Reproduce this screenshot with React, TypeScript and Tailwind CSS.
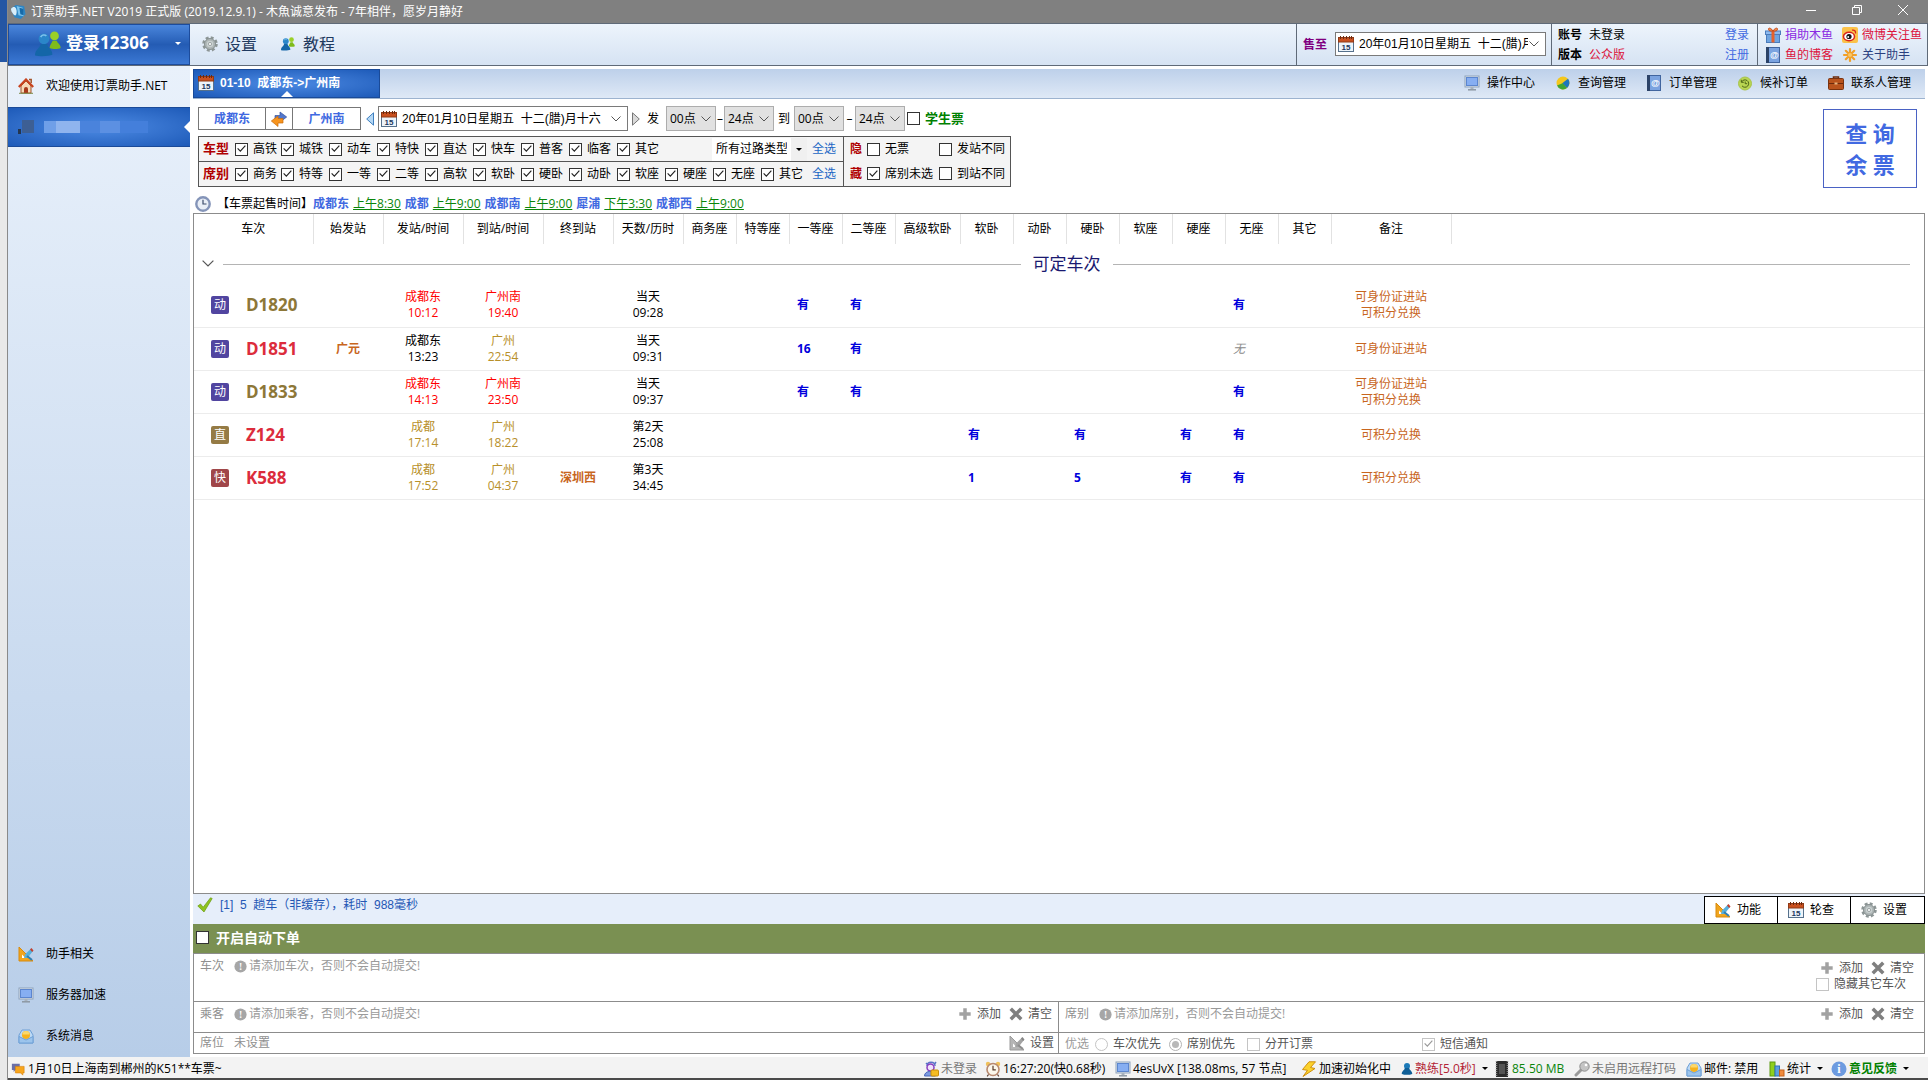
import { useState, type ReactNode } from "react";
import clsx from "clsx";

/* ---------- icons ---------- */

type IconProps = { className?: string };

const I = ({ className = "size-4", children }: { className?: string; children: ReactNode }) => (
  <svg viewBox="0 0 16 16" className={clsx("shrink-0", className)} fill="none" aria-hidden="true">
    {children}
  </svg>
);

const CalendarIcon = (p: IconProps) => (
  <I {...p}>
    <rect x="0.5" y="2.5" width="15" height="13" fill="#eef4fa" stroke="#56718c" />
    <rect x="0.5" y="1.5" width="15" height="4.5" fill="#c9501f" stroke="#8f3a17" />
    <path d="M2.5 0v3M5.5 0v3M8.5 0v3M11.5 0v3M13.5 0v3" stroke="#6b2a10" />
    <text x="8" y="13.6" fontSize="8" fontWeight="700" textAnchor="middle" fill="#1c3a5e" fontFamily="Liberation Sans, sans-serif">
      15
    </text>
  </I>
);

const AppIcon = (p: IconProps) => (
  <I {...p}>
    <path d="M0 5l5-4 9 1 1.500 9-5 5-7-2z" fill="#2f86c4" />
    <path d="M6 2l6.500 2 1 9-5.500-1z" fill="#7cc4ee" />
    <path d="M0 5c2-2.500 4.500-2.500 5.500 0s.5 6-.5 7-5-3-5-7z" fill="#d9eefa" />
    <path d="M9 4l4 1 .5 7-3.500-1z" fill="#176aa8" />
  </I>
);

const PeopleIcon = (p: IconProps) => (
  <I {...p}>
    <circle cx="12" cy="3" r="2.700" fill="#9ad027" />
    <path d="M9 10.500c0-2 1.400-3 1.800-4.500h2.600c.4 1.600 2.400 2 2.400 4.500-1.500.8-5 .9-6.800 0z" fill="#7fbb1b" />
    <circle cx="5.500" cy="4.800" r="3.300" fill="#2a86c9" />
    <path d="M0 15c0-3.800 3.200-4.500 3.500-7h4c.4 2.500 3.200 3.200 3.200 6.600-2 .9-7.600 1.200-10.700.4z" fill="#1466a8" />
    <path d="M3.500 3.800a2.200 2.200 0 0 1 3.500-.8" stroke="#7cc0ec" />
  </I>
);

const GearIcon = (p: IconProps) => (
  <I {...p}>
    <circle cx="8" cy="8" r="6.500" stroke="#8d9696" strokeWidth="2.500" strokeDasharray="2.900 2.200" />
    <circle cx="8" cy="8" r="5.500" fill="#aeb6b6" stroke="#868f8f" />
    <circle cx="8" cy="8" r="3.200" fill="#c9d0d0" />
    <circle cx="8" cy="8" r="1.600" fill="#f4f6f6" stroke="#868f8f" strokeWidth=".7" />
  </I>
);

const HomeIcon = (p: IconProps) => (
  <I {...p}>
    <path d="M3 8v7h10V8L8 3z" fill="#f6d9b8" stroke="#a4552c" />
    <path d="M.8 9L8 1.500 15.200 9" stroke="#c8431f" strokeWidth="2.200" />
    <path d="M11 1.500h2.200V5" stroke="#a4552c" strokeWidth="1.500" />
    <path d="M6 15v-4a2 2 0 0 1 4 0v4z" fill="#a8391b" />
    <path d="M1 15.300h14" stroke="#7c8a4a" />
  </I>
);

const MonitorIcon = (p: IconProps) => (
  <I {...p}>
    <rect x="1" y="1" width="14" height="11" fill="#dfe6ee" stroke="#8fa3bb" />
    <rect x="2.500" y="2.500" width="11" height="8" fill="#86aef2" stroke="#5c86cf" />
    <path d="M6.500 12h3v2h-3z" fill="#a8b2bd" />
    <path d="M4 14.800h8" stroke="#8c97a3" strokeWidth="1.500" />
  </I>
);

const MailIcon = (p: IconProps) => (
  <I {...p}>
    <path d="M1 7l3-5h8l3 5v8H1z" fill="#bcd9f5" stroke="#6ea0d6" />
    <circle cx="8" cy="7" r="4" fill="#f6b21c" />
    <path d="M4.500 6.500a3.500 3.500 0 0 1 7 0" fill="#fbd86b" />
    <path d="M1 8.500l7 3.500 7-3.500V15H1z" fill="#9cc4ec" stroke="#6ea0d6" />
  </I>
);

const RulerIcon = ({ className, muted }: IconProps & { muted?: boolean }) => (
  <I className={className}>
    <path d="M1 1v14h14z" fill={muted ? "#b5b5b5" : "#f0a51e"} stroke={muted ? "#9b9b9b" : "#d88a0c"} />
    <path d="M4 8.500V12h3.500z" fill="#fff" />
    <path d="M6 12l1-3.500L13 2.500l2 2.500-5.500 7z" fill={muted ? "#a3a3a3" : "#56b0dc"} />
    <path d="M12 3.500L13.500 2l2 2.500L14.200 6z" fill={muted ? "#858585" : "#c4402f"} />
    <path d="M9 10l5 4" stroke={muted ? "#8d8d8d" : "#2f80b4"} strokeWidth="2" />
  </I>
);

const GiftIcon = (p: IconProps) => (
  <I {...p}>
    <rect x="1.500" y="7" width="13" height="8.500" fill="#6fa4e0" stroke="#4b7cbc" />
    <rect x=".5" y="4" width="15" height="3.500" fill="#8dbaf0" stroke="#4b7cbc" />
    <path d="M6.500 4h3v11.500h-3z" fill="#e5622c" />
    <path d="M8 4C6 .5 3 .5 3.500 2.500S6 4 8 4zM8 4c2-3.500 5-3.500 4.500-1.500S10 4 8 4z" fill="#f08a4a" stroke="#c44a1c" />
  </I>
);

const WeiboIcon = (p: IconProps) => (
  <I {...p}>
    <rect width="16" height="16" rx="2" fill="#fbc24a" />
    <ellipse cx="7" cy="9.500" rx="5.500" ry="4.200" fill="#fff" stroke="#d8251c" strokeWidth="1.500" />
    <circle cx="7" cy="9.500" r="2.600" fill="#161616" />
    <circle cx="6.200" cy="10" r=".9" fill="#fff" />
    <path d="M10 3.200c2.500-.7 4 1 3.500 3.300" stroke="#d8251c" strokeWidth="1.300" />
  </I>
);

const BookIcon = (p: IconProps) => (
  <I {...p}>
    <rect x="1.500" y=".5" width="13" height="15" fill="#7ba3e0" stroke="#41659f" />
    <path d="M1 0h3v16H1z" fill="#2c4368" />
    <text x="9.300" y="11" fontSize="9" fontWeight="700" textAnchor="middle" fill="#fff" fontFamily="Liberation Sans, sans-serif">
      @
    </text>
  </I>
);

const SunIcon = (p: IconProps) => (
  <I {...p}>
    <path d="M8 2v12M2 8h12M3.800 3.800l8.400 8.400M12.200 3.800l-8.400 8.400" stroke="#f0a02a" strokeWidth="2.200" strokeLinecap="round" />
    <circle cx="8" cy="8" r="2" fill="#fbc766" />
  </I>
);

const PieIcon = (p: IconProps) => (
  <I {...p}>
    <circle cx="8" cy="8" r="6.500" fill="#f5c71c" />
    <path d="M8 8L2 10.500A6.500 6.500 0 0 0 12 13z" fill="#3fa535" />
    <path d="M7.500 8L13 3.800A6.500 6.500 0 0 1 12 13z" fill="#1d76bd" />
  </I>
);

const HistoryIcon = (p: IconProps) => (
  <I {...p}>
    <circle cx="8" cy="8.500" r="6.500" fill="#b9d552" stroke="#a9c44c" />
    <path d="M4.600 7A3.700 3.700 0 1 1 5 10.800M4.300 4.800v2.500h2.500" stroke="#4c6417" />
    <path d="M8.200 6.500v2.200h2" stroke="#4c6417" />
  </I>
);

const CaseIcon = (p: IconProps) => (
  <I {...p}>
    <path d="M5.500 4V2h5v2" stroke="#6d2b0c" strokeWidth="1.500" />
    <rect x=".5" y="3.500" width="15" height="11" rx="1" fill="#b9531c" stroke="#7a330f" />
    <path d="M1 8.500h14" stroke="#6d2b0c" />
    <rect x="6.500" y="7.500" width="3" height="2" fill="#e8b27c" />
  </I>
);

const SwapIcon = (p: IconProps) => (
  <I {...p}>
    <path d="M4 4.500h5V1L15.700 6 9 11V8.500H4z" fill="#5377cc" stroke="#3455a2" strokeWidth=".7" />
    <path d="M12 7.500H7V5L.3 10 7 15.500V12h5z" fill="#f7941d" stroke="#c76c0b" strokeWidth=".7" />
  </I>
);

const ClockIcon = (p: IconProps) => (
  <I {...p}>
    <circle cx="8" cy="8" r="6.700" fill="#e9eef6" stroke="#8494b8" strokeWidth="2.400" />
    <path d="M8 3.800V8h3.500" stroke="#3d4c6b" strokeWidth="1.200" />
  </I>
);

const CheckIcon = (p: IconProps) => (
  <I {...p}>
    <path d="M.8 9L3.500 7l2.700 3.200L13.500.8l1.700.7L7 15z" fill="#8fc31f" stroke="#6a9c12" strokeWidth=".7" />
  </I>
);

const InfoIcon = ({ className, color = "#a6a6a6", mark = "!" }: IconProps & { color?: string; mark?: string }) => (
  <I className={className}>
    <circle cx="8" cy="8" r="7.500" fill={color} />
    <text x="8" y="12.300" fontSize="12" fontWeight="700" textAnchor="middle" fill="#fff" fontFamily="Liberation Serif, serif">
      {mark}
    </text>
  </I>
);

const PlusIcon = ({ className = "size-3.5" }: IconProps) => (
  <I className={className}>
    <path d="M8 1.500v13M1.500 8h13" stroke="#a2a2a2" strokeWidth="4" />
  </I>
);

const CrossIcon = ({ className = "size-3.5" }: IconProps) => (
  <I className={className}>
    <path d="M2 2l12 12M14 2L2 14" stroke="#7f7f7f" strokeWidth="4" />
  </I>
);

const ChatIcon = (p: IconProps) => (
  <I {...p}>
    <path d="M1 2h9v7H5l-2 2.500V9H1z" fill="#6a6fa8" />
    <path d="M5 5h10v7.500h-1.500V15L11 12.500H5z" fill="#f7a51c" stroke="#d9820a" strokeWidth=".7" />
  </I>
);

const UserLockIcon = (p: IconProps) => (
  <I {...p}>
    <path d="M4 5c0-5 8-5 8 0M3 2l2 2M13 1l-2 3" stroke="#5b74c7" strokeWidth="1.500" />
    <circle cx="7.500" cy="6.500" r="3.500" fill="#efe2fb" stroke="#8a3fc0" strokeWidth="1.500" />
    <path d="M1.500 15c0-6 10-6 11 0z" fill="#7d9be0" stroke="#4a66b8" />
    <rect x="8" y="9" width="7.500" height="6" rx="1" fill="#f5bc22" stroke="#c98d0a" />
  </I>
);

const AlarmIcon = (p: IconProps) => (
  <I {...p}>
    <circle cx="3" cy="3" r="2.200" fill="#f0c15a" />
    <circle cx="13" cy="3" r="2.200" fill="#f0c15a" />
    <circle cx="8" cy="8.500" r="6" fill="#fbf7ec" stroke="#b98a70" strokeWidth="1.600" />
    <path d="M8 4.800v4h2.800M3.500 13.500L2.200 15.300M12.500 13.500l1.300 1.800" stroke="#5a3b2b" strokeWidth="1.200" />
  </I>
);

const BoltIcon = (p: IconProps) => (
  <I {...p}>
    <path d="M8 .8L1.500 8.500l5 .8L2 15.500 14 7.500 9.500 6.500 14.500.8z" fill="#fbd22c" stroke="#cf8f0e" />
  </I>
);

const PawnIcon = ({ className = "h-4 w-3" }: IconProps) => (
  <I className={className}>
    <circle cx="8" cy="4" r="4" fill="#1c7ab8" />
    <path d="M1 14.500C1 10 5 9.500 5 6.500h6c0 3 4 3.500 4 8-3 1.500-11 1.500-14 0z" fill="#105f97" />
  </I>
);

const ChipIcon = (p: IconProps) => (
  <I {...p}>
    <rect x="2" y="0" width="12" height="16" fill="#2c2c2c" />
    <path d="M2.500 0v16M13.500 0v16" stroke="#8c8c8c" strokeWidth="1.500" strokeDasharray="1 1" />
    <rect x="5" y="3" width="6" height="10" fill="#555" />
  </I>
);

const KeyIcon = (p: IconProps) => (
  <I {...p}>
    <path d="M8.500 7.500L2 14" stroke="#9a9a9a" strokeWidth="3" strokeLinecap="round" />
    <circle cx="10.500" cy="5.500" r="4.700" fill="#c4c4c4" stroke="#8d8d8d" />
    <circle cx="12" cy="4" r="1.300" fill="#fff" />
  </I>
);

const ChartIcon = (p: IconProps) => (
  <I {...p}>
    <rect x="1" y="1" width="5" height="14" fill="#8fcf1d" stroke="#5d9a10" />
    <rect x="6" y="5" width="4.500" height="10" fill="#5ca0e0" stroke="#2f70b5" />
    <rect x="10.500" y="9" width="4.500" height="6" fill="#f08a3c" stroke="#c3611a" />
  </I>
);

const Caret = ({ className = "text-black" }: IconProps) => (
  <svg viewBox="0 0 6 3" className={clsx("h-[3px] w-1.5 shrink-0", className)} fill="currentColor" aria-hidden="true">
    <path d="M0 0h6L3 3z" />
  </svg>
);

const Chevron = ({ className = "mr-1.5 w-2.5" }: IconProps) => (
  <svg viewBox="0 0 10 6" className={clsx("shrink-0 text-[#555]", className)} fill="none" stroke="currentColor" aria-hidden="true">
    <path d="M.5.5L5 5 9.500.5" />
  </svg>
);

/* ---------- controls ---------- */

function Check({ label, checked = false, disabled, className, box = "border-[#333]" }: { label: string; checked?: boolean; disabled?: boolean; className?: string; box?: string }) {
  const [on, setOn] = useState(checked);
  return (
    <label className={clsx("flex items-center gap-[5px] whitespace-nowrap", className)}>
      <span className="grid shrink-0 place-items-center">
        <input
          type="checkbox"
          checked={on}
          disabled={disabled}
          onChange={() => setOn(!on)}
          className={clsx("col-start-1 row-start-1 size-[13px] appearance-none border bg-white", box)}
        />
        {on && (
          <svg viewBox="0 0 10 8" className={clsx("pointer-events-none col-start-1 row-start-1 w-[9px]", disabled ? "text-[#999]" : "text-[#222]")} fill="none" stroke="currentColor" strokeWidth="1.300">
            <path d="M.7 3.800l3 3L9.300.8" />
          </svg>
        )}
      </span>
      {label}
    </label>
  );
}

function Select({ label, options, className, inner = "pl-1 pr-5", arrow }: { label: string; options: string[]; className?: string; inner?: string; arrow?: ReactNode }) {
  return (
    <div className={clsx("grid items-center border", className)}>
      <select aria-label={label} className={clsx("col-start-1 row-start-1 h-full w-full min-w-0 appearance-none bg-transparent", inner)}>
        {options.map((o) => (
          <option key={o}>{o}</option>
        ))}
      </select>
      <span className="pointer-events-none col-start-1 row-start-1 justify-self-end">{arrow ?? <Chevron />}</span>
    </div>
  );
}

const DATE = "20年01月10日星期五\u00a0\u00a0十二(腊)月十六";

function DateBox({ label, className }: { label: string; className?: string }) {
  return (
    <div className={clsx("flex items-center border border-[#7a7a7a] bg-white pl-0.5 font-['Liberation_Sans','Noto_Sans_CJK_SC',sans-serif]", className)}>
      <CalendarIcon />
      <Select label={label} options={[DATE]} className="h-full min-w-0 flex-1 border-none" inner="pl-[5px] pr-[17px]" />
    </div>
  );
}

/* ---------- header ---------- */

function TitleBar() {
  return (
    <div className="flex h-6 items-center border-b border-[#5f6a78] bg-[#808080] pl-[3px] text-white">
      <AppIcon className="size-[15px]" />
      <h1 className="ml-[5px] flex-1">订票助手.NET V2019 正式版 (2019.12.9.1) - 木魚诚意发布 - 7年相伴，愿岁月静好</h1>
      <div className="flex items-center gap-9 pr-5 pb-1">
        <button aria-label="最小化">
          <svg viewBox="0 0 10 10" className="size-2.5" stroke="currentColor"><path d="M0 5.500h10" /></svg>
        </button>
        <button aria-label="还原">
          <svg viewBox="0 0 10 10" className="size-2.5" stroke="currentColor" fill="none"><path d="M.5 2.500h7v7h-7zM2.500 2.500v-2h7v7h-2" /></svg>
        </button>
        <button aria-label="关闭">
          <svg viewBox="0 0 10 10" className="size-2.5" stroke="currentColor"><path d="M0 0l10 10M10 0L0 10" /></svg>
        </button>
      </div>
    </div>
  );
}

function Header() {
  return (
    <header className="flex h-[42px] border-b border-[#5f6a78] bg-gradient-to-b from-[#edf4fc] to-[#d6e3f3]">
      <button className="flex w-[182px] items-center border border-[#1d4c9c] bg-gradient-to-b from-[#4a86dc] via-[#245cb4] to-[#3b78d4] pr-2 pb-0.5 pl-[26px] text-[17px] font-bold text-white">
        <PeopleIcon className="size-[26px]" />
        <span className="ml-[5px] flex-1 text-left">登录12306</span>
        <Caret className="text-white" />
      </button>
      <nav className="flex flex-1 items-center gap-6 pb-0.5 pl-3 text-base text-[#1f3a5f]">
        <a href="#settings" className="flex items-center gap-[7px]">
          <GearIcon /> 设置
        </a>
        <a href="#guide" className="flex items-center gap-2">
          <PeopleIcon className="size-3.5" /> 教程
        </a>
      </nav>
      <div className="flex w-[255px] items-center gap-2 border-l border-[#5f6a78] pr-[5px] pl-1.5">
        <span className="font-bold text-[#800080]">售至</span>
        <DateBox label="售至" className="mb-0.5 h-6 flex-1" />
      </div>
      <div className="grid w-[206px] grid-cols-[31px_1fr_auto] content-center gap-y-1 border-l border-[#5f6a78] pr-2 pl-1.5 leading-4">
        <b>账号</b>
        <span>未登录</span>
        <a href="#login" className="text-[#4169e1]">登录</a>
        <b>版本</b>
        <span className="text-[#dc143c]">公众版</span>
        <a href="#register" className="text-[#4169e1]">注册</a>
      </div>
      <div className="grid w-[171px] grid-cols-[77px_1fr] content-center gap-y-1 border-x border-[#5f6a78] pl-[7px] leading-4 whitespace-nowrap">
        <a href="#donate" className="flex items-center gap-1 text-[#8a2be2]"><GiftIcon />捐助木鱼</a>
        <a href="#weibo" className="flex items-center gap-1 text-[#dc143c]"><WeiboIcon />微博关注鱼</a>
        <a href="#blog" className="flex items-center gap-1 text-[#dc143c]"><BookIcon />鱼的博客</a>
        <a href="#about" className="flex items-center gap-1 text-[#2a3f80]"><SunIcon />关于助手</a>
      </div>
    </header>
  );
}

function Sidebar() {
  return (
    <aside className="flex w-[182px] flex-col bg-gradient-to-b from-[#e9f1fb] to-[#b7cde8]">
      <a href="#welcome" className="flex h-[41px] items-center gap-3 pb-0.5 pl-2.5">
        <HomeIcon /> 欢迎使用订票助手.NET
      </a>
      <a href="#account" aria-label="当前账号" className="flex h-10 items-center border-y border-[#1a4a98] bg-radial from-[#4d8be4] to-[#1d5ab8] pl-2.5">
        <svg viewBox="0 0 16 16" className="size-4" aria-hidden="true">
          <path d="M4 1h12v13H4z" fill="#3d5f94" />
          <path d="M0 10h3v5H0z" fill="#24364f" />
        </svg>
        <span className="ml-2.5 h-3 w-3 bg-[#6f9fe8]" />
        <span className="h-3 w-6 bg-[#8fb4ee]" />
        <span className="h-3 w-5 bg-[#4a83dc]" />
        <span className="h-3 w-5 bg-[#5c90e2]" />
        <span className="h-3 w-7 bg-[#447fdb]" />
        <svg viewBox="0 0 6 12" className="ml-auto h-3 w-1.5" fill="#fff" aria-hidden="true">
          <path d="M6 0v12L0 6z" />
        </svg>
      </a>
      <nav className="mt-auto pb-px">
        <a href="#helper" className="flex h-[41px] items-center gap-3 pl-2.5"><RulerIcon /> 助手相关</a>
        <a href="#servers" className="flex h-[41px] items-center gap-3 pl-2.5"><MonitorIcon /> 服务器加速</a>
        <a href="#messages" className="flex h-[41px] items-center gap-3 pl-2.5"><MailIcon /> 系统消息</a>
      </nav>
    </aside>
  );
}

function TabBar() {
  return (
    <div className="flex h-[30px] justify-between border-b border-[#9db3cf] bg-gradient-to-b from-[#bdd0ea] to-[#dfe9f6]">
      <button className="grid w-[187px] border border-[#1a4a98] bg-radial from-[#4d8be4] to-[#1d5ab8] font-bold text-white">
        <span className="col-start-1 row-start-1 flex items-center gap-1.5 pb-0.5 pl-1 font-['Liberation_Sans','Noto_Sans_CJK_SC',sans-serif]">
          <CalendarIcon /> 01-10 &nbsp;成都东-&gt;广州南
        </span>
        <svg viewBox="0 0 12 6" className="col-start-1 row-start-1 h-1.5 w-3 self-end justify-self-center" fill="#fff" aria-hidden="true">
          <path d="M0 6l6-6 6 6z" />
        </svg>
      </button>
      <nav className="flex items-center gap-5 pr-3.5 pb-0.5">
        <a href="#center" className="flex items-center gap-[7px]"><MonitorIcon />操作中心</a>
        <a href="#queries" className="flex items-center gap-[7px]"><PieIcon />查询管理</a>
        <a href="#orders" className="flex items-center gap-[7px]"><BookIcon />订单管理</a>
        <a href="#waitlist" className="flex items-center gap-[7px]"><HistoryIcon />候补订单</a>
        <a href="#contacts" className="flex items-center gap-[7px]"><CaseIcon />联系人管理</a>
      </nav>
    </div>
  );
}

/* ---------- query form ---------- */

const trainKinds = ["高铁", "城铁", "动车", "特快", "直达", "快车", "普客", "临客", "其它"];
const seatKinds = ["商务", "特等", "一等", "二等", "高软", "软卧", "硬卧", "动卧", "软座", "硬座", "无座", "其它"];

const saleTimes = [
  ["成都东", "上午8:30"],
  ["成都", "上午9:00"],
  ["成都南", "上午9:00"],
  ["犀浦", "下午3:30"],
  ["成都西", "上午9:00"],
];

const HourSelect = ({ label, value }: { label: string; value: string }) => (
  <Select label={label} options={[value]} className="h-[25px] w-[50px] border-[#adadad] bg-[#e1e1e1]" inner="pl-[3px] pr-4" arrow={<Chevron className="mr-1 w-2.5" />} />
);

function QueryForm() {
  return (
    <section className="flex justify-between pt-[7px] pr-2 pl-[5px]">
      <div>
        <div className="flex h-[25px] items-center">
          <div className="flex h-[23px] divide-x divide-[#777] border border-[#777] font-bold text-[#4169e1]">
            <button className="w-[67px]">成都东</button>
            <button className="w-[27px] px-[5px]" aria-label="交换"><SwapIcon /></button>
            <button className="w-[67px]">广州南</button>
          </div>
          <button aria-label="前一天" className="w-[17px] pl-[5px]">
            <svg viewBox="0 0 8 14" className="h-3.5 w-2" fill="#b5d8f5" stroke="#3f7fbf"><path d="M7.500.8v12.400L.7 7z" /></svg>
          </button>
          <DateBox label="出发日期" className="h-[25px] w-[250px]" />
          <button aria-label="后一天" className="w-[19px] pl-1">
            <svg viewBox="0 0 8 14" className="h-3.5 w-2" fill="#d9d9d9" stroke="#777"><path d="M.5.8v12.400L7.300 7z" /></svg>
          </button>
          <span className="w-[19px]">发</span>
          <HourSelect label="发车起" value="00点" />
          <span className="w-2 text-center">–</span>
          <HourSelect label="发车止" value="24点" />
          <span className="w-5 text-center">到</span>
          <HourSelect label="到达起" value="00点" />
          <span className="w-[11px] text-center">–</span>
          <HourSelect label="到达止" value="24点" />
          <Check label="学生票" className="ml-0.5 text-[13px] font-bold text-[#008000]" />
        </div>

        <div className="mt-[5px] flex w-fit border border-[#555] bg-[#f4f4f4]">
          <div className="w-[644px] divide-y divide-[#555]">
            <div className="flex h-[25px] items-center pr-[7px] pl-1">
              <b className="w-8 text-[13px] text-[#b00000]">车型</b>
              {trainKinds.map((k) => (
                <Check key={k} label={k} checked className="w-12 first-of-type:w-[46px]" />
              ))}
              <Select
                label="过路类型"
                options={["所有过路类型"]}
                className="ml-auto h-[23px] w-[95px] border-none bg-white"
                arrow={<span className="flex h-[23px] w-4 items-center justify-center bg-[#f0f0f0]"><Caret /></span>}
              />
              <a href="#all-trains" className="ml-[5px] text-[#1a66c4]">全选</a>
            </div>
            <div className="flex h-6 items-center pr-[7px] pl-1">
              <b className="w-8 text-[13px] text-[#b00000]">席别</b>
              {seatKinds.map((k) => (
                <Check key={k} label={k} checked className="w-12 first-of-type:w-[46px]" />
              ))}
              <a href="#all-seats" className="ml-auto text-[#1a66c4]">全选</a>
            </div>
          </div>
          <div className="grid w-[167px] grid-cols-[17px_72px_1fr] items-center border-l border-[#555] pl-1.5">
            <b className="text-[#b00000]">隐</b>
            <Check label="无票" />
            <Check label="发站不同" />
            <b className="text-[#b00000]">藏</b>
            <Check label="席别未选" checked />
            <Check label="到站不同" />
          </div>
        </div>
      </div>

      <button className="mt-[3px] h-[79px] w-[94px] border border-[#4a62c4] text-[22px] leading-[31px] font-bold text-[#4169e1]">
        查 询
        <br />
        余 票
      </button>
    </section>
  );
}

function SaleTimes() {
  return (
    <div className="flex h-[25px] items-center pt-1.5 pl-0.5">
      <ClockIcon />
      <span className="ml-1.5">【车票起售时间】</span>
      <ul className="flex gap-1">
        {saleTimes.map(([station, time]) => (
          <li key={station} className="flex gap-1">
            <span className="font-bold text-[#4169e1]">{station}</span>
            <a href="#sale" className="text-[#0a850a] underline">{time}</a>
          </li>
        ))}
      </ul>
    </div>
  );
}

/* ---------- trains ---------- */

const columns: [string, string][] = [
  ["车次", "w-[119px]"],
  ["始发站", "w-[70px]"],
  ["发站/时间", "w-[80px]"],
  ["到站/时间", "w-[80px]"],
  ["终到站", "w-[70px]"],
  ["天数/历时", "w-[70px]"],
  ["商务座", "w-[53px]"],
  ["特等座", "w-[53px]"],
  ["一等座", "w-[53px]"],
  ["二等座", "w-[53px]"],
  ["高级软卧", "w-[65px]"],
  ["软卧", "w-[53px]"],
  ["动卧", "w-[53px]"],
  ["硬卧", "w-[53px]"],
  ["软座", "w-[53px]"],
  ["硬座", "w-[53px]"],
  ["无座", "w-[53px]"],
  ["其它", "w-[53px]"],
  ["备注", "w-[120px]"],
];

const seatColumns = columns.slice(6, 18).map(([name]) => name);

const RED = "text-[#f00]";
const GOLD = "text-[#b8902a]";
const BLACK = "text-black";

type Train = {
  kind: string;
  badge: string;
  no: string;
  noColor: string;
  origin?: string;
  from: [string, string, string];
  to: [string, string, string];
  terminal?: string;
  days: [string, string];
  seats: Record<string, string>;
  notes: string[];
};

const trains: Train[] = [
  {
    kind: "动", badge: "bg-[#5145a0]", no: "D1820", noColor: "text-[#8d7738]",
    from: ["成都东", "10:12", RED], to: ["广州南", "19:40", RED], days: ["当天", "09:28"],
    seats: { 一等座: "有", 二等座: "有", 无座: "有" }, notes: ["可身份证进站", "可积分兑换"],
  },
  {
    kind: "动", badge: "bg-[#5145a0]", no: "D1851", noColor: "text-[#dc2c3c]", origin: "广元",
    from: ["成都东", "13:23", BLACK], to: ["广州", "22:54", GOLD], days: ["当天", "09:31"],
    seats: { 一等座: "16", 二等座: "有", 无座: "无" }, notes: ["可身份证进站"],
  },
  {
    kind: "动", badge: "bg-[#5145a0]", no: "D1833", noColor: "text-[#8d7738]",
    from: ["成都东", "14:13", RED], to: ["广州南", "23:50", RED], days: ["当天", "09:37"],
    seats: { 一等座: "有", 二等座: "有", 无座: "有" }, notes: ["可身份证进站", "可积分兑换"],
  },
  {
    kind: "直", badge: "bg-[#957b45]", no: "Z124", noColor: "text-[#dc2c3c]",
    from: ["成都", "17:14", GOLD], to: ["广州", "18:22", GOLD], days: ["第2天", "25:08"],
    seats: { 软卧: "有", 硬卧: "有", 硬座: "有", 无座: "有" }, notes: ["可积分兑换"],
  },
  {
    kind: "快", badge: "bg-[#a04649]", no: "K588", noColor: "text-[#dc2c3c]",
    from: ["成都", "17:52", GOLD], to: ["广州", "04:37", GOLD], terminal: "深圳西", days: ["第3天", "34:45"],
    seats: { 软卧: "1", 硬卧: "5", 硬座: "有", 无座: "有" }, notes: ["可积分兑换"],
  },
];

function TrainTable() {
  return (
    <div className="flex-1 border border-[#8c8c8c] bg-white">
      <table className="w-full table-fixed border-collapse text-center">
        <thead>
          <tr className="h-[30px]">
            {columns.map(([name, width]) => (
              <th key={name} className={clsx("border-r border-[#e2e2e2] p-0 font-normal whitespace-nowrap", width)}>
                {name}
              </th>
            ))}
            <th aria-hidden="true" />
          </tr>
        </thead>
        <tbody>
          <tr className="h-10">
            <td colSpan={20} className="p-0">
              <div className="flex items-center pr-3.5 pl-2">
                <button aria-label="折叠"><Chevron className="w-3" /></button>
                <hr className="ml-[9px] flex-1 border-[#b4b4b4]" />
                <h2 className="mx-3 text-[17px] text-[#191970]">可定车次</h2>
                <hr className="flex-1 border-[#b4b4b4]" />
              </div>
            </td>
          </tr>
          {trains.map((t) => (
            <tr key={t.no} className="h-[43px] border-b border-[#ececec] leading-4">
              <td className="p-0">
                <div className="flex items-center pl-[17px]">
                  <span className={clsx("size-[18px] rounded-[2px] leading-[18px] text-white", t.badge)}>{t.kind}</span>
                  <b className={clsx("ml-[17px] text-[17px] leading-4", t.noColor)}>{t.no}</b>
                </div>
              </td>
              <td className="p-0 font-bold text-[#c8661e]">{t.origin}</td>
              <td className={clsx("p-0", t.from[2])}>{t.from[0]}<br />{t.from[1]}</td>
              <td className={clsx("p-0", t.to[2])}>{t.to[0]}<br />{t.to[1]}</td>
              <td className="p-0 font-bold text-[#c8661e]">{t.terminal}</td>
              <td className="p-0">{t.days[0]}<br />{t.days[1]}</td>
              {seatColumns.map((s) => (
                <td key={s} className={clsx("p-0 pl-2 text-left", t.seats[s] === "无" ? "text-[#8a8a8a] italic" : "font-bold text-[#0000dc]")}>
                  {t.seats[s]}
                </td>
              ))}
              <td className="p-0 text-[#c8661e]">
                {t.notes.map((n) => (
                  <p key={n}>{n}</p>
                ))}
              </td>
              <td />
            </tr>
          ))}
        </tbody>
      </table>
    </div>
  );
}

function ResultBar() {
  const cell = "flex w-[73px] items-center gap-1.5 pl-2.5";
  return (
    <div className="flex h-[30px] items-start bg-[#e6eefa]">
      <p className="flex h-[22px] flex-1 items-center gap-[7px] pl-1 font-['Liberation_Sans','Noto_Sans_CJK_SC',sans-serif] text-[#2457b5]">
        <CheckIcon /> [1]&nbsp; 5 &nbsp;趟车（非缓存），耗时&nbsp; 988毫秒
      </p>
      <div className="mt-0.5 flex h-7 divide-x divide-black border border-black bg-white">
        <button className={cell}><RulerIcon />功能</button>
        <button className={cell}><CalendarIcon />轮查</button>
        <button className={cell}><GearIcon />设置</button>
      </div>
    </div>
  );
}

/* ---------- auto order ---------- */

const AddClear = () => (
  <div className="flex items-center text-[#555]">
    <button className="flex items-center gap-[5px]"><PlusIcon />添加</button>
    <button className="ml-2 flex items-center gap-[5px]"><CrossIcon />清空</button>
  </div>
);

const Hint = ({ children }: { children: ReactNode }) => (
  <span className="flex items-center gap-0.5 text-[#9a9a9a]">
    <InfoIcon className="size-[13px]" />
    {children}
  </span>
);

function AutoOrder() {
  return (
    <section>
      <div className="flex h-[29px] items-center bg-[#7a9052] pb-0.5 pl-[3px]">
        <Check label="开启自动下单" className="gap-[7px] text-sm font-bold text-white" />
      </div>
      <div className="divide-y divide-[#8c8c8c] border border-[#8c8c8c] text-[#8f8f8f]">
        <div className="flex h-[48px] items-start justify-between pr-2.5 pl-1.5 leading-4">
          <div className="flex gap-2.5 pt-1">
            <span>车次</span>
            <Hint>请添加车次，否则不会自动提交!</Hint>
          </div>
          <div className="pt-1.5">
            <AddClear />
            <Check label="隐藏其它车次" disabled box="border-[#c4c4c4]" className="-ml-1 text-[#555]" />
          </div>
        </div>
        <div className="grid grid-cols-2 divide-x divide-[#8c8c8c]">
          <div className="flex h-[30px] items-start justify-between pt-1 pr-1.5 pl-1.5">
            <div className="flex gap-2.5">
              <span>乘客</span>
              <Hint>请添加乘客，否则不会自动提交!</Hint>
            </div>
            <AddClear />
          </div>
          <div className="flex h-[30px] items-start justify-between pt-1 pr-2.5 pl-1.5">
            <div className="flex gap-2.5">
              <span>席别</span>
              <Hint>请添加席别，否则不会自动提交!</Hint>
            </div>
            <AddClear />
          </div>
        </div>
        <div className="grid grid-cols-2 divide-x divide-[#8c8c8c]">
          <div className="flex h-5 items-center justify-between pr-1 pl-1.5">
            <div className="flex gap-2.5">
              <span>席位</span>
              <span>未设置</span>
            </div>
            <button className="flex items-center gap-[5px] text-[#555]"><RulerIcon muted />设置</button>
          </div>
          <div className="flex h-5 items-center pt-0.5 pl-1.5 text-[#555]">
            <span className="w-[30px] text-[#9a9a9a]">优选</span>
            <label className="flex w-[74px] items-center gap-[5px]">
              <input type="radio" name="prefer" disabled className="size-[13px] appearance-none rounded-full border border-[#c4c4c4]" />
              车次优先
            </label>
            <label className="flex w-[78px] items-center gap-[5px]">
              <input type="radio" name="prefer" disabled defaultChecked className="size-[13px] appearance-none rounded-full border border-[#b4b4b4] bg-[#b8b8b8] bg-clip-content p-0.5" />
              席别优先
            </label>
            <Check label="分开订票" disabled box="border-[#c4c4c4]" className="w-[175px]" />
            <Check label="短信通知" checked disabled box="border-[#c4c4c4]" />
          </div>
        </div>
      </div>
    </section>
  );
}

function StatusBar() {
  const item = "flex items-center gap-0.5";
  return (
    <footer className="flex h-[23px] items-center border-b-2 border-[#4a4a4a] bg-[#f3f3f3] pt-0.5 pr-[17px] pl-[3px] whitespace-nowrap">
      <p className="flex flex-1 items-center gap-[3px]"><ChatIcon className="size-3.5" />1月10日上海南到郴州的K51**车票~</p>
      <span className={clsx(item, "w-[62px] text-[#777]")}><UserLockIcon />未登录</span>
      <span className={clsx(item, "w-[130px]")}><AlarmIcon />16:27:20(快0.68秒)</span>
      <span className={clsx(item, "w-[186px]")}><MonitorIcon />4esUvX [138.08ms, 57 节点]</span>
      <span className={clsx(item, "w-[100px]")}><BoltIcon />加速初始化中</span>
      <button className={clsx(item, "w-[93px] text-[#b22234]")}><PawnIcon />熟练[5.0秒]<Caret className="ml-1 text-black" /></button>
      <span className={clsx(item, "w-20 text-[#0a850a]")}><ChipIcon />85.50 MB</span>
      <span className={clsx(item, "w-28 text-[#777]")}><KeyIcon />未启用远程打码</span>
      <span className={clsx(item, "w-[83px]")}><MailIcon />邮件: 禁用</span>
      <button className={clsx(item, "w-[62px]")}><ChartIcon />统计<Caret className="ml-1" /></button>
      <button className={clsx(item, "w-20 font-bold text-[#008000]")}><InfoIcon color="#6d9be0" mark="i" />意见反馈<Caret className="ml-1 text-black" /></button>
    </footer>
  );
}

export default function App() {
  return (
    <div className="flex min-h-screen bg-white font-['Open_Sans','Noto_Sans_CJK_SC',sans-serif] text-xs text-black">
      {/* edge of the window behind */}
      <div className="flex w-2 flex-col border-r border-[#8a8a8a] bg-[#e9e9e9]">
        <div className="h-[62px] bg-[#2456a4]" />
      </div>
      <div className="flex min-w-0 flex-1 flex-col">
        <TitleBar />
        <Header />
        <div className="flex flex-1">
          <Sidebar />
          <main className="flex min-w-0 flex-1 flex-col pt-[3px] pr-[3px] pb-[3px] pl-[3px]">
            <TabBar />
            <QueryForm />
            <SaleTimes />
            <TrainTable />
            <ResultBar />
            <AutoOrder />
          </main>
        </div>
        <StatusBar />
      </div>
    </div>
  );
}
